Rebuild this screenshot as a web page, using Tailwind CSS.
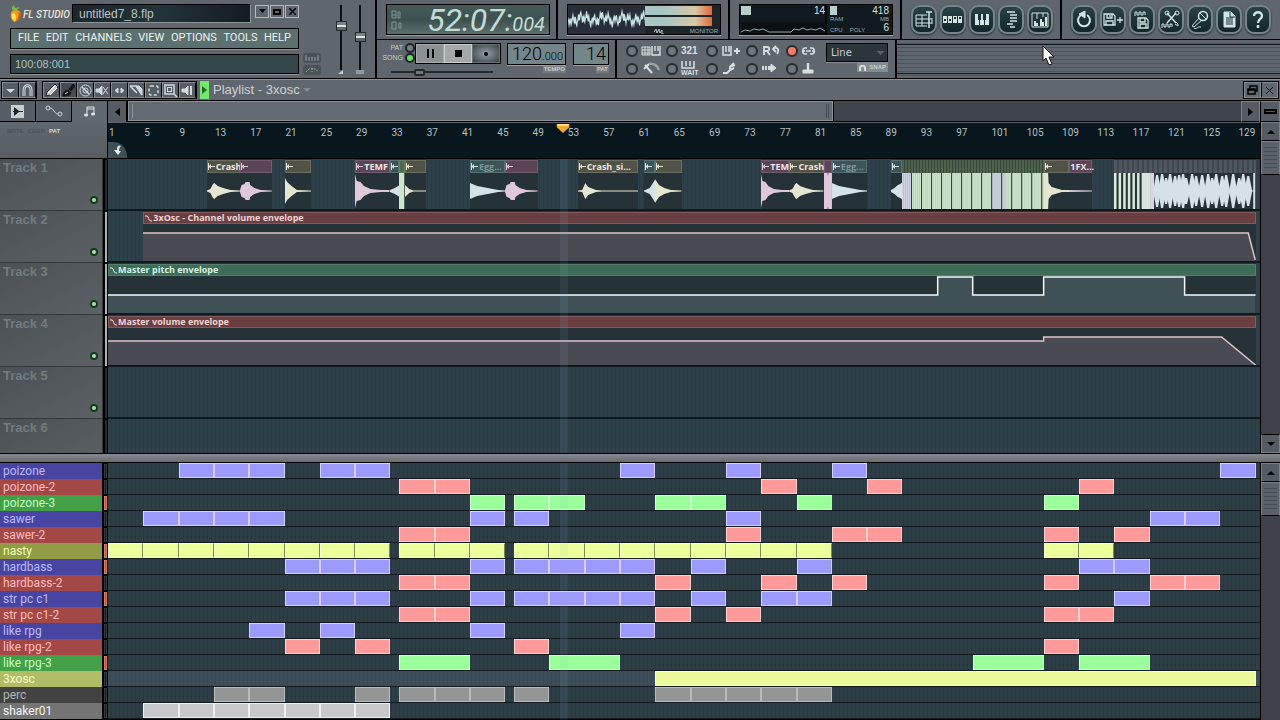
<!DOCTYPE html>
<html lang="en">
<head>
    <meta charset="UTF-8">
    <meta name="viewport" content="width=device-width, initial-scale=1.0">
    <title>FL Studio - untitled7_8.flp</title>
    <script src="https://cdn.jsdelivr.net/npm/@tailwindcss/browser@4"></script>
</head>
<body class="flex h-screen flex-col overflow-hidden bg-black font-['Liberation_Sans',sans-serif] text-[#c5cbcd] select-none">

    <!-- Main toolbar -->
    <header class="flex h-[79px] shrink-0 border-b border-black bg-[#5f666d]">
        <div class="flex w-[377px] shrink-0 border-r-2 border-black pl-[10px]">
            <div class="w-[289px]">
                <div class="mt-[4px] flex h-[20px] items-start">
                    <div class="flex h-[20px] items-center">
                        <svg class="h-[18px] w-[12px]" viewBox="0 0 12 18">
                            <path d="M2 6C0 9 0 14 4 17C8 17 11 12 11 8C10 5 5 4 2 6Z" fill="#f39a1d"/>
                            <path d="M2 9C1 13 3 15 5 16C7 13 6 10 4 8Z" fill="#ffe04a"/>
                            <path d="M8 7C10 9 8 14 5 17C9 16 11 12 11 8Z" fill="#d9531e"/>
                            <path d="M3 5C1 4 2 1 4 0C4 2 5 3 6 3C7 2 9 2 10 3C8 3 7 5 6 6Z" fill="#6fbf3a"/>
                        </svg>
                        <span class="w-[50px] pl-px font-['Roboto',sans-serif] text-[10px] font-medium whitespace-nowrap text-[#ece5d6] italic">FL STUDIO</span>
                    </div>
                    <div class="flex h-[19px] flex-1 items-center border border-t-black border-r-[#8d9498] border-b-[#8d9498] border-l-black bg-linear-to-r from-[#1a262b] via-[#22333a] to-[#141c22] pl-[6px] text-[12px] text-[#b9c5c4]">untitled7_8.flp</div>
                    <div class="mt-px ml-[4px] flex gap-px">
                        <button aria-label="Minimize" class="flex h-[13px] w-[14px] items-center justify-center border border-[#b4babd] bg-[#5f666d]"><svg class="h-[5px] w-[7px]" viewBox="0 0 7 5"><path d="M0 0H7L3.500 4Z"/></svg></button>
                        <button aria-label="Restore" class="flex h-[13px] w-[14px] items-center justify-center border border-[#b4babd] bg-[#5f666d]"><svg class="h-[6px] w-[8px]" viewBox="0 0 8 6"><path d="M1 1H7V5H1Z" fill="none" stroke="#000" stroke-width="2"/></svg></button>
                        <button aria-label="Close" class="flex h-[13px] w-[14px] items-center justify-center border border-[#b4babd] bg-[#5f666d]"><svg class="h-[7px] w-[7px]" viewBox="0 0 7 7"><path d="M0 0L7 7M7 0L0 7" stroke="#000" stroke-width="1.500"/></svg></button>
                    </div>
                </div>
                <nav class="mt-[4px] flex h-[21px] items-center justify-between border border-black bg-[#5c706f] px-[7px] font-['Roboto',sans-serif] text-[11px] text-[#e8f3f1] shadow-[0_1px_0_#8b9296]">
                    <button>FILE</button>
                    <button>EDIT</button>
                    <button>CHANNELS</button>
                    <button>VIEW</button>
                    <button>OPTIONS</button>
                    <button>TOOLS</button>
                    <button>HELP</button>
                </nav>
                <div class="mt-[5px] flex h-[20px] items-center border border-black bg-[#33464a] pl-[4px] text-[11px] text-[#b3c1be] shadow-[0_1px_0_#8b9296]">100:08:001</div>
            </div>
            <div class="ml-[4px] flex flex-col gap-[2px] pt-[53px]">
                <button aria-label="Typing keyboard" class="flex h-[10px] w-[18px] items-center justify-center rounded-[3px] bg-[#4a5157]"><svg class="h-[6px] w-[14px]" viewBox="0 0 14 6"><path d="M1 0V6M4 2V6M7 2V6M10 2V6M13 0V6" stroke="#9aa3a8"/></svg></button>
                <button aria-label="Metronome" class="flex h-[10px] w-[18px] items-center justify-center rounded-[3px] bg-[#4a5157]"><svg class="h-[6px] w-[14px]" viewBox="0 0 14 6"><path d="M1 5C4 0 10 0 13 5M7 1V5" fill="none" stroke="#9aa3a8" stroke-dasharray="2 1"/></svg></button>
            </div>
            <div class="ml-[14px] flex gap-[7px] pt-[5px]">
                <div class="flex flex-col items-center">
                    <input type="range" aria-label="Master volume" value="71" class="h-[65px] w-[12px] appearance-none bg-[linear-gradient(to_right,transparent_5px,#0d1013_5px,#0d1013_7px,transparent_7px)] [direction:rtl] [writing-mode:vertical-lr] [&::-webkit-slider-thumb]:h-[10px] [&::-webkit-slider-thumb]:w-[11px] [&::-webkit-slider-thumb]:appearance-none [&::-webkit-slider-thumb]:border [&::-webkit-slider-thumb]:border-[#23282c] [&::-webkit-slider-thumb]:bg-[linear-gradient(#7b8185_3px,#e0e4e4_3px,#e0e4e4_5px,#5e6468_5px)]">
                    <svg class="h-[4px] w-[6px]" viewBox="0 0 6 4"><path d="M0 4H5V0Z" fill="#c6ccce"/></svg>
                </div>
                <div class="flex flex-col items-center">
                    <input type="range" aria-label="Master pitch" value="51" class="h-[65px] w-[12px] appearance-none bg-[linear-gradient(to_right,transparent_5px,#0d1013_5px,#0d1013_7px,transparent_7px)] [direction:rtl] [writing-mode:vertical-lr] [&::-webkit-slider-thumb]:h-[10px] [&::-webkit-slider-thumb]:w-[11px] [&::-webkit-slider-thumb]:appearance-none [&::-webkit-slider-thumb]:border [&::-webkit-slider-thumb]:border-[#23282c] [&::-webkit-slider-thumb]:bg-[linear-gradient(#7b8185_3px,#e0e4e4_3px,#e0e4e4_5px,#5e6468_5px)]">
                    <svg class="h-[4px] w-[8px]" viewBox="0 0 8 4"><path d="M1 0V4M3 0V4M5 0V4M7 0V4" stroke="#c6ccce"/></svg>
                </div>
            </div>
        </div>

        <div class="flex min-w-0 flex-1 flex-col">
            <div class="flex h-[40px] border-b border-black">
                <!-- Time display -->
                <div class="flex w-[181px] shrink-0 items-center border-r-2 border-black pl-[9px]">
                    <div class="flex h-[31px] w-[164px] items-center border border-black bg-linear-to-b from-[#465a5a] via-[#3c504f] to-[#5a706e] text-[#c3dcd6] shadow-[0_1px_0_#9aa1a4]">
                        <svg class="ml-[4px] h-[20px] w-[12px]" viewBox="0 0 12 20"><path d="M1 1H5V8H1ZM1 5H5M7 2H9V8H7ZM1 12H5V19H1ZM8 13H10V18H8Z" fill="none" stroke="#7f9894"/></svg>
                        <span class="ml-auto font-['Roboto',sans-serif] text-[32px] leading-none italic">52:07:</span>
                        <span class="mt-[8px] mr-[4px] font-['Roboto',sans-serif] text-[20px] leading-none italic">004</span>
                    </div>
                </div>
                <!-- Oscilloscope -->
                <div class="flex w-[172px] shrink-0 items-center border-r-2 border-black pl-[9px]">
                    <div class="flex h-[31px] w-[154px] border border-black bg-[#1d2529] shadow-[0_1px_0_#9aa1a4]">
                        <svg class="h-[29px] w-[77px] bg-[#272e3a]" viewBox="0 0 77 29"><path id="scope" fill="#c6e4e2"/></svg>
                        <div class="flex flex-1 flex-col gap-[2px] pt-px">
                            <div class="h-[9px] w-[67px] bg-[linear-gradient(90deg,#a9c6c4_30%,#d8c8a4_75%,#e0693a)]"></div>
                            <div class="h-[9px] w-[67px] bg-[linear-gradient(90deg,#a9c6c4_30%,#d8c8a4_75%,#e0693a)]"></div>
                            <div class="flex h-[6px] items-center justify-between pl-[9px]">
                                <svg class="h-[5px] w-[10px]" viewBox="0 0 10 5"><path d="M0 3L2 0L3 4L5 0L6 4L8 1V5H10" fill="none" stroke="#b4c4c5"/></svg>
                                <span class="pr-[2px] text-[6px] leading-none text-[#9aa8aa]">MONITOR</span>
                            </div>
                        </div>
                    </div>
                </div>
                <!-- CPU and memory -->
                <div class="flex w-[172px] shrink-0 items-center border-r-2 border-black pl-[9px]">
                    <div class="flex h-[31px] w-[154px] border border-black bg-[#111a1f] shadow-[0_1px_0_#9aa1a4]">
                        <div class="flex w-[85px] flex-col pl-px">
                            <div class="flex h-[11px] items-center justify-between"><i class="block h-[9px] w-[10px] bg-[#b9cfcd]"></i><span class="text-[10px] leading-none text-[#d5e2e0]">14</span></div>
                            <svg class="mt-[6px] h-[12px] w-[84px] bg-[#0a1014]" viewBox="0 0 84 12"><path d="M0 10L4 8L9 9L13 7L18 8L22 7L26 9L28 10H50L53 7L58 8L62 6L66 8L70 7L75 8L79 6L84 9" fill="none" stroke="#98a7aa"/></svg>
                        </div>
                        <div class="flex flex-1 flex-col border-l-2 border-[#05080a] px-[3px] text-[6px] leading-none text-[#9aa8aa]">
                            <div class="flex h-[11px] items-center justify-between"><i class="block h-[9px] w-[7px] bg-[#b9cfcd]"></i><span class="text-[10px] leading-none text-[#d5e2e0]">418</span></div>
                            <div class="flex justify-between"><span>RAM</span><span>MB</span></div>
                            <div class="mt-px flex items-end gap-[7px]"><span>CPU</span><span>POLY</span><span class="ml-auto text-[10px] leading-none text-[#d5e2e0]">6</span></div>
                        </div>
                    </div>
                </div>
                <!-- Window and tool buttons -->
                <div id="window-buttons" class="flex w-[160px] shrink-0 items-center gap-[3px] border-r-2 border-black pl-[9px]"></div>
                <div id="tool-buttons" class="flex flex-1 items-center gap-[3px] pl-[9px]"></div>
            </div>

            <div class="flex flex-1">
                <!-- Transport -->
                <div class="flex w-[240px] shrink-0 border-r-2 border-black pl-[7px]">
                    <div class="pt-[3px]">
                        <div class="flex">
                            <div class="flex w-[31px] flex-col items-end text-[7px]">
                                <label class="flex h-[10px] items-center gap-[2px]">PAT<input type="radio" name="mode" class="h-[10px] w-[10px] appearance-none rounded-full border-2 border-[#1d2327] bg-[#767e83] checked:bg-[#5be05f]"></label>
                                <label class="flex h-[10px] items-center gap-[2px]">SONG<input type="radio" name="mode" checked class="h-[10px] w-[10px] appearance-none rounded-full border-2 border-[#1d2327] bg-[#767e83] checked:bg-[#5be05f]"></label>
                            </div>
                            <div class="flex h-[21px] border border-black">
                                <button aria-label="Pause" class="flex w-[28px] items-center justify-center border border-[#a5abae] bg-[#8b9194]"><svg class="h-[9px] w-[7px]" viewBox="0 0 7 9"><path d="M0 0H2V9H0ZM5 0H7V9H5Z"/></svg></button>
                                <button aria-label="Stop" class="flex w-[28px] items-center justify-center border border-[#c9cdcf] bg-[#a3a8aa]"><i class="block h-[7px] w-[7px] bg-black"></i></button>
                                <button aria-label="Record" class="flex w-[28px] items-center justify-center border border-[#6b7377] bg-radial from-[#93a0a3] to-[#3a4347]"><i class="block h-[4px] w-[4px] rounded-full bg-black"></i></button>
                            </div>
                        </div>
                        <input type="range" aria-label="Song position" value="25" class="mt-[4px] ml-[7px] block h-[8px] w-[102px] appearance-none bg-[linear-gradient(transparent_3px,#24292d_3px,#24292d_5px,transparent_5px)] [&::-webkit-slider-thumb]:h-[7px] [&::-webkit-slider-thumb]:w-[11px] [&::-webkit-slider-thumb]:appearance-none [&::-webkit-slider-thumb]:rounded-[2px] [&::-webkit-slider-thumb]:border-2 [&::-webkit-slider-thumb]:border-[#24292d] [&::-webkit-slider-thumb]:bg-[#6f767b]">
                    </div>
                    <div class="ml-[6px] flex flex-col items-end pt-[3px]">
                        <div class="flex h-[22px] w-[59px] items-center justify-end border border-black bg-[#74868a] pr-[2px] text-black shadow-[0_1px_0_#9aa1a4]"><span class="font-['Roboto',sans-serif] text-[18px] leading-none font-light">120</span><span class="mt-[5px] font-['Roboto',sans-serif] text-[11px] leading-none font-light">.000</span></div>
                        <span class="mt-px bg-[#747b80] px-px text-[6px] leading-[7px] font-bold">TEMPO</span>
                    </div>
                    <div class="ml-[7px] flex flex-col items-end pt-[3px]">
                        <div class="flex h-[22px] w-[36px] items-center justify-end border border-black bg-[#74868a] pr-[2px] font-['Roboto',sans-serif] text-[18px] leading-none font-light text-black shadow-[0_1px_0_#9aa1a4]">14</div>
                        <span class="mt-px bg-[#747b80] px-px text-[6px] leading-[7px] font-bold">PAT</span>
                    </div>
                </div>
                <!-- Shortcut switches -->
                <div class="flex w-[280px] shrink-0 border-r-2 border-black pl-[9px]">
                    <div id="switches" class="grid w-[200px] grid-cols-5 grid-rows-2 content-start pt-[3px]"></div>
                    <div class="flex flex-col items-end pt-[3px]">
                        <select aria-label="Snap" class="h-[19px] w-[62px] appearance-none border border-black bg-[#2c343c] bg-[linear-gradient(45deg,transparent_50%,#566068_50%),linear-gradient(135deg,#566068_50%,transparent_50%)] bg-[length:4px_4px] bg-[position:50px_7px,54px_7px] bg-no-repeat pl-[4px] font-['DejaVu_Sans',sans-serif] text-[10px] text-[#c8ced1] shadow-[0_1px_0_#8b9296]"><option>Line</option></select>
                        <span class="mt-px flex h-[9px] items-center gap-[3px] bg-[#858c90] px-[2px] text-[6px] font-bold"><svg class="h-[6px] w-[7px]" viewBox="0 0 7 6"><path d="M1 6V3C1 0 6 0 6 3V6" fill="none" stroke="#d8dcde" stroke-width="2"/></svg>SNAP</span>
                    </div>
                </div>
                <div class="flex flex-1 flex-col justify-between bg-[repeating-linear-gradient(#5f666d_0,#5f666d_3px,#4c5359_3px,#4c5359_4px)]">
                    <i class="mt-[4px] h-px bg-[#14181c]"></i>
                    <i class="mb-[4px] h-px bg-[#14181c]"></i>
                </div>
            </div>
        </div>
    </header>

    <!-- Playlist title bar -->
    <div class="flex h-[22px] shrink-0 items-center border-t border-b border-t-[#8b9296] border-b-black bg-[#60676e] px-px">
        <div id="menu-tools" class="flex border border-black"></div>
        <div id="edit-tools" class="ml-[5px] flex border border-black"></div>
        <button aria-label="Show pattern" class="ml-[3px] flex h-[18px] w-[9px] items-center justify-center bg-[#72e86c]"><svg class="h-[8px] w-[5px]" viewBox="0 0 5 8"><path d="M0 0L5 4L0 8Z" fill="#246a2b"/></svg></button>
        <h1 class="ml-[4px] text-[13px] leading-[16px] text-[#ccd1d4]">Playlist - 3xosc</h1>
        <svg class="ml-[3px] h-[4px] w-[8px]" viewBox="0 0 8 4"><path d="M0 0H8L4 4Z" fill="#848b90"/></svg>
        <div class="ml-auto flex border border-black">
            <button aria-label="Detach" class="flex h-[16px] w-[17px] items-center justify-center border border-[#868d91]"><svg class="h-[10px] w-[11px]" viewBox="0 0 11 10"><path d="M3 3V1H10V6H8M1 4H8V9H1ZM1 5H8" fill="none" stroke="#000" stroke-width="1.500"/></svg></button>
            <button aria-label="Close playlist" class="flex h-[16px] w-[17px] items-center justify-center border border-l-black border-[#868d91]"><svg class="h-[7px] w-[7px]" viewBox="0 0 7 7"><path d="M0 0L7 7M7 0L0 7" stroke="#14181c"/></svg></button>
        </div>
    </div>

    <!-- Playlist tracks -->
    <main class="flex min-h-0 flex-1 flex-col">
        <div class="flex h-[21px] shrink-0 bg-[#3f454b]">
            <div class="flex w-[108px] shrink-0 border-r border-black">
                <button aria-label="Audio clips" class="flex w-[36px] items-center justify-center border-r border-b border-black bg-[#565d64]"><svg class="h-[13px] w-[13px]" viewBox="0 0 13 13"><rect width="13" height="13" fill="#c9ced0"/><path d="M2 6H12V7H2ZM3 2L8 6V7L3 11Z" fill="#1d2327"/></svg></button>
                <button aria-label="Automation clips" class="flex w-[36px] items-center justify-center border-r border-b border-black bg-[#565d64]"><svg class="h-[12px] w-[18px]" viewBox="0 0 18 12"><path d="M5 3C9 3 9 9 13 9" fill="none" stroke="#d3d8da"/><circle cx="3" cy="3" r="2" fill="none" stroke="#d3d8da"/><circle cx="15" cy="9" r="2" fill="none" stroke="#d3d8da"/></svg></button>
                <button aria-label="Pattern clips" class="flex w-[35px] items-center justify-center bg-[#60676e]"><svg class="h-[11px] w-[11px]" viewBox="0 0 11 11"><path d="M3 9V1H10V8M3 3H10" fill="none" stroke="#e0e4e5"/><ellipse cx="2" cy="9" rx="2" ry="1.500" fill="#e0e4e5"/><ellipse cx="9" cy="8" rx="2" ry="1.500" fill="#e0e4e5"/></svg></button>
            </div>
            <button aria-label="Scroll left" class="flex w-[20px] shrink-0 items-center justify-center border-r-2 border-black bg-[#555c63]"><svg class="h-[8px] w-[5px]" viewBox="0 0 5 8"><path d="M5 0L0 4L5 8Z"/></svg></button>
            <div class="flex-1 border-b border-black">
                <div class="flex h-[20px] w-[63.3%] items-center justify-between border border-[#8b9296] bg-[#636a71] px-[3px] shadow-[1px_0_0_#000]">
                    <i class="h-[14px] w-[2px] border-l border-[#8b9296]"></i>
                    <i class="h-[14px] w-[3px] border-x border-[#464c52]"></i>
                </div>
            </div>
            <button aria-label="Scroll right" class="flex w-[19px] shrink-0 items-center justify-center border border-[#7c8388] border-b-black bg-[#555c63]"><svg class="h-[8px] w-[5px]" viewBox="0 0 5 8"><path d="M0 0L5 4L0 8Z"/></svg></button>
            <button aria-label="Zoom" class="flex w-[20px] shrink-0 items-center justify-center border border-[#7c8388] border-b-black border-l-black bg-[#555c63]"><i class="block h-[5px] w-[13px] border-2 border-black bg-[#565d64]"></i></button>
        </div>

        <div class="flex min-h-0 flex-1">
            <div class="flex min-w-0 flex-1 flex-col border-r border-black">
                <div class="flex h-[37px] shrink-0 border-b border-black">
                    <div class="flex w-[107px] shrink-0 gap-[4px] bg-linear-to-b from-[#60676e] to-[#565c62] pt-[6px] pl-[7px] text-[6px] leading-[7px] font-bold text-[#4c5358]">
                        <span>NOTE</span><span>CHAN</span><span class="text-[#d8dcde]">PAT</span>
                    </div>
                    <div class="relative ml-px min-w-0 flex-1 overflow-hidden border-t border-[#5b656b] bg-[#08161d]">
                        <div id="ruler" class="flex pt-[3px] font-['Roboto',sans-serif] text-[10px] leading-[14px] text-[#b4c0c2]"></div>
                        <div class="absolute bottom-0 left-0 flex h-[16px] w-[19px] items-center justify-center rounded-tr-[14px] bg-[#3e5159]"><svg class="h-[10px] w-[9px]" viewBox="0 0 9 10"><path d="M8 1C4 0 4 3 4 5H1L5 10L8 6H6C6 4 6 3 8 1Z" fill="#e8eef0"/></svg></div>
                        <svg class="absolute top-px left-[39.500%] h-[10px] w-[13px] -translate-x-1/2" viewBox="0 0 13 10"><path d="M0 0H13V3L6.500 9L0 3Z" fill="#f7a922"/><path d="M1 0H12V2H1Z" fill="#ffe28a"/></svg>
                    </div>
                </div>
                <div class="relative min-h-0 flex-1 overflow-hidden">
                    <div id="tracks"></div>
                    <div class="pointer-events-none absolute inset-y-0 right-0 left-[108px]"><i class="absolute inset-y-0 left-[39.200%] w-[8px] bg-[#8fb3c0]/10"></i></div>
                </div>
            </div>
            <div class="flex w-[19px] shrink-0 flex-col bg-[#3e4248]">
                <button aria-label="Scroll up" class="flex h-[19px] items-center justify-center border border-[#7c8388] border-b-black bg-[#555c63]"><svg class="h-[4px] w-[8px]" viewBox="0 0 8 4"><path d="M0 4H8L4 0Z"/></svg></button>
                <div class="h-[34px] border border-[#7c8388] border-b-black bg-[#5a6168] px-[2px] py-[5px]"><i class="block h-[22px] bg-[repeating-linear-gradient(#464c52_0,#464c52_1px,transparent_1px,transparent_4px)]"></i></div>
                <button aria-label="Scroll down" class="mt-auto flex h-[19px] items-center justify-center border border-[#7c8388] border-t-black bg-[#555c63]"><svg class="h-[4px] w-[8px]" viewBox="0 0 8 4"><path d="M0 0H8L4 4Z"/></svg></button>
            </div>
        </div>
    </main>

    <div class="h-[10px] shrink-0 border-y border-black bg-linear-to-b from-[#858b90] to-[#646b71]"></div>

    <!-- Pattern clips -->
    <section class="flex shrink-0">
        <div class="relative min-w-0 flex-1 border-r border-black pb-px">
            <div id="patterns"></div>
            <div class="pointer-events-none absolute inset-y-0 right-0 left-[108px]"><i class="absolute inset-y-0 left-[39.200%] w-[8px] bg-[#8fb3c0]/10"></i></div>
        </div>
        <div class="flex w-[19px] shrink-0 flex-col bg-[#3e4248]">
            <button aria-label="Scroll patterns up" class="flex h-[19px] items-center justify-center border border-[#7c8388] border-b-black bg-[#555c63]"><svg class="h-[4px] w-[8px]" viewBox="0 0 8 4"><path d="M0 4H8L4 0Z"/></svg></button>
            <div class="h-[34px] border border-[#7c8388] border-b-black bg-[#5a6168] px-[2px] py-[5px]"><i class="block h-[22px] bg-[repeating-linear-gradient(#464c52_0,#464c52_1px,transparent_1px,transparent_4px)]"></i></div>
        </div>
    </section>

    <!-- Mouse pointer -->
    <svg class="pointer-events-none absolute top-[45px] left-[1042px] h-[22px] w-[13px]" viewBox="0 0 13 22"><path d="M1 1V16L4 13L7 20L10 19L7 12H12Z" fill="#fff" stroke="#111"/></svg>

    <script>
        // Bars visible across the timeline
        const BARS = 130.5;
        const pct = (bars) => (bars / BARS * 100) + '%';

        const windowButtons = [
            ['Playlist', '<path d="M3 6H14M3 10H19M3 14H19M3 17H14M3 6V17M9 6V17M19 9V15"/><path d="M13 3H19M16 3V19" stroke-width="1.5"/>'],
            ['Step sequencer', '<path d="M1 7H5V14H1ZM6 7H10V14H6ZM11 7H15V14H11ZM16 7H20V14H16Z" fill="#d3e4e2" stroke="none"/><path d="M2 11H4M7 11H9M12 9H14M17 9H19" stroke="#1a3237" stroke-width="2"/>'],
            ['Piano roll', '<path d="M4 5H18V16H4Z" fill="#d3e4e2" stroke="none"/><path d="M8.500 5V16M13.500 5V16" stroke="#1a3237"/><path d="M8.500 5V11M13.500 5V11" stroke="#1a3237" stroke-width="3"/>'],
            ['Browser', '<path d="M7 3H15M10 6H17M10 9H17M10 12H17M7 15H13M10 18H15" stroke-width="1.5"/>'],
            ['Mixer', '<path d="M3 4H19V18H3ZM8 4V10M14 4V8"/><path d="M6 17V12M8 17V14M12 17V10M14 17V13M17 17V8" stroke-width="2"/>']
        ];
        const toolButtons = [
            ['Undo', '<path d="M8 6A6 6 0 1 0 14 6" stroke-width="2"/><path d="M6 5L12 2V9Z" fill="#d3e4e2"/>'],
            ['Save new version', '<path d="M2 5H11L13 7V16H2ZM5 5V9H10V5M4 16V12H11V16M8 6V8M15 11H21M18 8V14" stroke-width="1.3"/>'],
            ['Render', '<path d="M4 7V3H6V6H8V3H10V6H12V3H14V6"/><path d="M7 9H15L17 11V19H7ZM9 9V13H14V9M9 19V15H15V19" stroke-width="1.3"/>'],
            ['Edit audio', '<path d="M7 4L16 14M16 4L7 14" stroke-width="1.5"/><circle cx="7" cy="4" r="2"/><circle cx="17" cy="4" r="2"/><path d="M16 13L18 15V17L15 15M2 19V15H4V18H6V15H8V18H10V15H12V18"/>'],
            ['One-click recording', '<circle cx="14" cy="7" r="4.500" stroke-width="1.5"/><path d="M11 4L17 10M10 9L3 17L5 18L13 11M5 19C8 21 8 17 12 18"/>'],
            ['Notes', '<path d="M6 3H13L17 7V18H6Z" fill="#d3e4e2"/><path d="M12 3V8H17M8 9H15M8 11H15M8 13H15M8 15H15" stroke="#1a3237"/>'],
            ['Help', '<path d="M7 7C7 2 15 2 15 7C15 10 11 10 11 14" stroke-width="2.300"/><path d="M11 16V19" stroke-width="2.500"/>']
        ];
        const renderRound = (list) => list.map(([name, icon]) => `
            <button aria-label="${name}" class="flex h-[29px] w-[26px] items-center justify-center rounded-[9px] border-2 border-[#71878a] bg-linear-to-b from-[#2a4145] to-[#12262b] shadow-[0_1px_2px_#22282c]">
                <svg class="h-[22px] w-[22px] shrink-0" viewBox="0 0 22 22" fill="none" stroke="#d3e4e2">${icon}</svg>
            </button>`).join('');
        document.getElementById('window-buttons').innerHTML = renderRound(windowButtons);
        document.getElementById('tool-buttons').innerHTML = renderRound(toolButtons);

        // Shortcut switches, row by row
        const switches = [
            ['Typing keyboard to piano', '<path d="M1 2H9V10H1ZM1 5H9M1 8H9M4 2V10M7 2V10"/><path d="M11 1V10H19V1M14 1V6M17 1V6" stroke-width="1.4"/>'],
            ['Countdown before recording', ''],
            ['Blend recording', '<path d="M2 1V10H10V1M5 1V7M8 1V7" stroke-width="1.500"/><path d="M13 6H19M16 3V9" stroke-width="2"/>'],
            ['Loop recording', '<path d="M3 10V2H6C9 2 9 6 6 6H3M6 6L9 10" stroke-width="1.8"/><path d="M12 4C16 1 19 5 16 9M15 1L12 4L15 7" stroke-width="1.800"/>'],
            ['Keep grouped', '<path d="M6 3H4C1 3 1 9 4 9H6M9 3H11C14 3 14 9 11 9H9M1 6H4M5 6H10M11 6H14" stroke-width="1.6"/>'],
            ['Wait for input', '<path d="M4 3L11 11M3 7L8 2" stroke-width="2"/><path d="M8 2C13 1 17 4 18 8" stroke="#9aa2a6" stroke-width="2.500"/>'],
            ['Metronome', ''],
            ['Step editing', '<path d="M2 11H6L9 8V5L13 1M9 8L13 6M11 4L14 3" stroke-width="2"/>'],
            ['Auto scroll', '<path d="M1 6H3M4 6H6M7 6H10" stroke-width="4"/><path d="M10 2L15 6L10 10Z" fill="#d9dee0"/>'],
            ['Joystick', '<path d="M7 1V8" stroke-width="2.500"/><path d="M2 8H12V11H2Z" fill="#d9dee0"/>']
        ];
        document.getElementById('switches').innerHTML = switches.map(([name, icon], i) => {
            let drawn = `<svg class="h-[13px] w-[20px]" viewBox="0 0 20 13" fill="none" stroke="#d9dee0">${icon}</svg>`;
            if (i === 1) drawn = '<span class="text-[10px] leading-[12px] font-bold text-[#d9dee0]">321</span>';
            if (i === 6) drawn = '<span class="flex flex-col"><svg class="h-[8px] w-[14px]" viewBox="0 0 14 8"><path d="M1 0V7H13V0M5 0V5M9 0V5" fill="none" stroke="#d9dee0" stroke-width="1.5"/></svg><span class="text-[7px] leading-[7px] font-bold text-[#d9dee0]">WAIT</span></span>';
            return `
            <label class="flex h-[16px] items-center gap-[3px]">
                <input type="checkbox" aria-label="${name}" ${i === 4 ? 'checked' : ''} class="h-[12px] w-[12px] shrink-0 appearance-none rounded-full border-2 border-[#252b2f] bg-[#6d757a] checked:bg-[#ff7a66]">
                ${drawn}
            </label>`;
        }).join('');

        // Playlist toolbar
        const menuTools = [
            ['Options', '<path d="M3 6H12L7.500 10Z" fill="#d3d8da" stroke="none"/>'],
            ['Snap', '<path d="M4 13V7C4 1 11 1 11 7V13" stroke-width="3"/><path d="M4 13V7C4 1 11 1 11 7V13" stroke="#6b7277"/>']
        ];
        const editTools = [
            ['Draw', '<path d="M2 13L3 9L11 1L14 4L6 12Z" fill="#c4cacc" stroke="#22282c"/><path d="M4 10L11 3M6 12L13 5" stroke="#fff"/>'],
            ['Paint', '<path d="M2 13C2 9 5 7 7 7L10 10C9 13 5 13 2 13ZM8 6L12 1L14 3L10 8Z" fill="#14181b" stroke="#14181b"/><path d="M4 11L7 9"/>'],
            ['Delete', '<circle cx="7.500" cy="7.500" r="5.500"/><circle cx="7.500" cy="7.500" r="2.500"/><path d="M4 4L11 11" stroke-width="1.500"/>'],
            ['Mute', '<path d="M1 6H4L7 3V12L4 9H1Z" fill="#d3d8da"/><path d="M8 4L13 11M13 4L8 11"/>'],
            ['Slip', '<path d="M6 5V10L3 7.500ZM9 5V10L12 7.500Z" fill="#d3d8da"/>'],
            ['Slice', '<path d="M1 3H7L13 12M1 3L8 10" stroke-width="1.500"/><path d="M7 3L13 12V6L10 3Z" fill="#d3d8da"/>'],
            ['Select', '<rect x="3" y="3" width="9" height="9" rx="2" stroke-width="1.500" stroke-dasharray="3 2"/>'],
            ['Zoom', '<path d="M2 2H11V11H2ZM11 11L14 14" stroke-width="1.5"/><rect x="4.500" y="4.500" width="4" height="4"/>'],
            ['Playback', '<path d="M2 6H5L8 3V12L5 9H2Z" fill="#d3d8da"/><path d="M11 3V12" stroke-width="2"/>']
        ];
        const renderTools = (list) => list.map(([name, icon]) => `
            <button aria-label="${name}" class="flex h-[16px] w-[17px] items-center justify-center border border-[#868d91] border-r-black ${name === 'Paint' ? 'bg-[#454b51]' : 'bg-[#555c63]'}">
                <svg class="h-[15px] w-[15px] shrink-0" viewBox="0 0 15 15" fill="none" stroke="#d3d8da">${icon}</svg>
            </button>`).join('');
        document.getElementById('menu-tools').innerHTML = renderTools(menuTools);
        document.getElementById('edit-tools').innerHTML = renderTools(editTools);

        // Ruler
        let ruler = '';
        for (let bar = 1; bar <= 129; bar += 4) {
            ruler += `<span class="shrink-0 pl-px" style="width:${bar === 129 ? 'auto' : pct(4)}">${bar}</span>`;
        }
        document.getElementById('ruler').innerHTML = ruler;

        // Oscilloscope trace
        let upper = '', lower = '';
        for (let x = 0; x <= 77; x++) {
            const mid = 14 + Math.sin(x * 0.9) * 3 + Math.sin(x * 0.31) * 2 + Math.sin(x * 2.3) * 3;
            const reach = 2 + Math.abs(Math.sin(x * 1.7)) * 2;
            upper += `L${x} ${mid - reach}`;
            lower = `L${x} ${mid + reach}` + lower;
        }
        document.getElementById('scope').setAttribute('d', 'M' + upper.slice(1) + lower + 'Z');

        // Audio clips: start bar, length, colour, label, amplitude points (x 0-100, level 0-18)
        const tones = {
            olive: ['bg-[#505346] border-[#6b6d61]', '#e4e6d0'],
            pink: ['bg-[#5a4456] border-[#745a6e]', '#e0c8dc'],
            teal: ['bg-[#3c5458] border-[#567173]', '#d3e3e6'],
            green: ['bg-[#4d6a4c] border-[#66805f]', '#cfe6cd']
        };
        const hit = [[0, 0.6], [10, 2], [18, 7], [22, 8], [32, 5], [48, 3], [70, 1], [100, 0.6]];
        const decay = [[0, 17], [5, 10], [16, 9], [26, 5], [45, 2], [75, 1], [100, 1]];
        const puff = [[0, 1], [5, 6], [14, 7], [18, 9], [30, 9], [32, 6], [45, 3], [65, 1], [100, 0.6]];
        const soft = [[0, 8], [20, 5], [50, 3], [80, 1], [100, 0.6]];
        const audioClips = [
            [11.2, 3.8, 'olive', 'Crash', hit],
            [15, 3.6, 'pink', '', puff],
            [20, 3, 'olive', '', [[0, 13], [8, 9], [25, 5], [45, 1], [100, 0.6]]],
            [28, 3.9, 'pink', 'TEMF', decay],
            [31.9, 1.1, 'teal', '', [[0, 1], [50, 3], [100, 6]]],
            [33.6, 2.4, 'olive', '', [[0, 6], [20, 2], [40, 0.6], [100, 0.6]]],
            [33, 0.6, 'green', '', [[0, 18], [100, 18]]],
            [41, 4, 'teal', 'Egg...', soft],
            [45, 3.7, 'pink', '', puff],
            [53.2, 6.8, 'olive', 'Crash_si...', [[0, 0.6], [7, 1], [10, 5], [12, 8], [17, 4], [30, 1], [40, 0.6], [100, 0.6]]],
            [60.7, 1.3, 'teal', '', [[0, 0.6], [50, 3], [100, 12]]],
            [62, 3, 'olive', '', [[0, 12], [15, 6], [35, 3], [60, 1], [100, 0.6]]],
            [74, 3.2, 'pink', 'TEM', decay],
            [77.2, 3.9, 'olive', 'Crash', hit],
            [81.1, 0.9, 'pink', '', [[0, 18], [45, 18], [50, 15], [55, 18], [100, 18]]],
            [82, 4, 'teal', 'Egg...', soft],
            [88.7, 1.3, 'teal', '', [[0, 1], [30, 3], [60, 6], [80, 7], [100, 9]]],
            [106, 2.9, 'olive', '', [[0, 18], [16, 18], [18, 8], [30, 4], [70, 1], [100, 1]]],
            [108.9, 2.6, 'pink', '1FX...', [[0, 1], [100, 0.6]]]
        ];
        const wave = (points) => 'M' + points.map(([x, a]) => `${x} ${18 - a}`).join('L')
            + 'L' + points.slice().reverse().map(([x, a]) => `${x} ${18 + a}`).join('L') + 'Z';
        const audioHtml = audioClips.map(([start, length, tone, label, points]) => `
            <div class="absolute inset-y-0 bg-[#253238]" style="left:${pct(start)};width:${pct(length)}">
                <div class="mt-px flex h-[13px] items-center gap-px border font-['Open_Sans',sans-serif] text-[9px] font-bold whitespace-nowrap ${tones[tone][0]} ${tone === 'teal' ? 'text-[#7e9698]' : 'text-[#eee6e4]'}">
                    ${label === '1FX...' || length < 1 ? '' : `<svg class="h-[7px] w-[7px] shrink-0" viewBox="0 0 7 7"><path d="M0 0H1V3L3 1V3H7V4H3V6L1 4V7H0Z" fill="${tones[tone][1]}"/></svg>`}${label}
                </div>
                <svg class="block h-[36px] w-full" viewBox="0 0 100 36" preserveAspectRatio="none"><path d="${wave(points)}" fill="${tones[tone][1]}"/></svg>
            </div>`).join('');

        // Chopped regions: dense slices, then sparse slices that turn into short blobs
        let dense = '<rect width="141" height="36" fill="#8da391"/>';
        for (let x = 0; x < 141; x += 2) {
            const fill = (x < 10 || (x > 88 && x < 104)) ? '#cdd3e2' : '#cfe6cd';
            dense += `<rect x="${x}" y="0" width="${x % 10 === 8 ? 1 : 1.7}" height="36" fill="${fill}"/>`;
        }
        for (let x = 9; x < 141; x += 10) dense += `<rect x="${x}" y="0" width="1" height="36" fill="#2c3b3c"/>`;
        let sparse = '';
        for (let x = 0; x < 28; x += 4.6) sparse += `<rect x="${x}" y="0" width="2.5" height="36" fill="#d8ecd9"/>`;
        sparse += '<rect x="28" y="0" width="8" height="36" fill="#d5e6db"/><rect x="36" y="0" width="4" height="36" fill="#ddd2e4"/>';
        [43, 48, 52, 56, 61, 65, 69, 72, 78, 82, 88, 94, 98, 102, 108, 112, 119, 125, 129, 134].forEach((x, i) => {
            const tall = [16, 17, 13, 17, 15][i % 5];
            sparse += `<path d="M${x - 4} 18L${x - 1} ${18 - tall}H${x + 1}L${x + 4} 18L${x + 1} ${18 + tall}H${x - 1}Z" fill="#d5e0e8"/>`;
        });
        sparse += '<path d="M40 18H141" stroke="#d5e0e8"/><rect x="139" y="0" width="2" height="36" fill="#d5e0e8"/>';
        const choppedHtml = `
            <div class="absolute inset-y-0 bg-[#253238]" style="left:${pct(90)};width:${pct(16)}">
                <div class="mt-px h-[13px] bg-[repeating-linear-gradient(90deg,#4f6349_0,#4f6349_2px,#384840_2px,#384840_3px)]"></div>
                <svg class="block h-[36px] w-full" viewBox="0 0 141 36" preserveAspectRatio="none">${dense}</svg>
            </div>
            <div class="absolute inset-y-0 bg-[#253238]" style="left:${pct(114)};width:${pct(16)}">
                <div class="mt-px h-[13px] bg-[repeating-linear-gradient(90deg,#53555f_0,#53555f_3px,#3b4850_3px,#3b4850_5px)]"></div>
                <svg class="block h-[36px] w-full" viewBox="0 0 141 36" preserveAspectRatio="none">${sparse}</svg>
            </div>`;

        // Automation clips: start, length, label, colour, drawing width, line
        const automation = {
            2: [4, 126, '3xOsc - Channel volume envelope', 'red', 1113, 'M0 9H1106L1113 36'],
            3: [0, 130, 'Master pitch envelope', 'green', 1148, 'M0 19H830V1H865V19H936V1H1077V19H1148'],
            4: [0, 130, 'Master volume envelope', 'red', 1148, 'M0 13H936V9H1114L1148 37']
        };
        const automationHtml = ([start, length, label, tone, span, line]) => `
            <div class="absolute inset-y-0 bg-[#253238]" style="left:${pct(start)};width:${pct(length)}">
                <div class="mt-px flex h-[12px] items-center gap-px border pl-px font-['Open_Sans',sans-serif] text-[9px] font-bold ${tone === 'red' ? 'border-[#825a5c] bg-[#693f42] text-[#f0d3d2]' : 'border-[#54806b] bg-[#3f6c57] text-[#d5f3e2]'}">
                    <svg class="h-[7px] w-[7px] shrink-0" viewBox="0 0 7 7"><path d="M0 1H2C4 1 3 6 6 6H7" fill="none" stroke="#e8eaea"/></svg>${label}
                </div>
                <svg class="block h-[38px] w-full" viewBox="0 0 ${span} 38" preserveAspectRatio="none">
                    <path d="${line}V38H0Z" fill="${tone === 'red' ? '#494a52' : '#3f5157'}"/>
                    <path d="${line}" fill="none" stroke="${tone === 'red' ? '#e0c4c8' : '#f2fbfa'}" stroke-width="1.500" vector-effect="non-scaling-stroke"/>
                </svg>
            </div>`;

        document.getElementById('tracks').innerHTML = [1, 2, 3, 4, 5, 6].map((n) => `
            <div class="flex h-[52px]">
                <div class="relative w-[103px] shrink-0 border-r border-b border-[#33383b] bg-linear-to-br from-[#4b5154] to-[#5b6165] pt-px pl-[3px]">
                    <span class="block text-[13px] leading-[16px] font-bold text-[#747b7e]">Track ${n}</span>
                    <button aria-label="Mute track ${n}" class="absolute right-[4px] bottom-[6px] h-[8px] w-[8px] rounded-full border-2 border-[#0f3d16] bg-[#b7dcb9]"></button>
                </div>
                <div class="w-[5px] shrink-0 border-l-2 border-black bg-black pt-px pb-px"><i class="block h-full w-[2px] ${n > 1 && n < 5 ? 'bg-[#aeb5b8]' : 'bg-[#222a2f]'}"></i></div>
                <div class="relative min-w-0 flex-1 overflow-hidden border-b-2 border-[#10191e] bg-[repeating-linear-gradient(90deg,#2e414b_0,#2e414b_3px,#2a3b45_3px,#2a3b45_4px)]">
                    ${n === 1 ? audioHtml + choppedHtml : ''}${automation[n] ? automationHtml(automation[n]) : ''}
                </div>
            </div>`).join('');

        // Pattern rows: name, colour, start bars (a pair gives start and length), light
        const colors = {
            blue: ['bg-[#4745a1] text-[#b9b9ff]', 'bg-[#9c9aff] border-[#d3d2ff]'],
            red: ['bg-[#a34747] text-[#ffbdbd]', 'bg-[#ff9a9a] border-[#ffd2d0]'],
            green: ['bg-[#43a047] text-[#bfffc0]', 'bg-[#9aff9a] border-[#d2ffd0]'],
            yellow: ['bg-[#939b45] text-[#f0ffb0]', 'bg-[#ebff9a] border-[#f7ffd0]'],
            lime: ['bg-[#b1bd66] text-[#f4ffc4]', 'bg-[#ebf99a] border-[#f7ffd0]'],
            gray: ['bg-[#424242] text-[#b5b5b5]', 'bg-[#949696] border-[#b9bcbc]'],
            silver: ['bg-[#747474] text-[#f4f4f4]', 'bg-[#c8c8ca] border-[#f0f0f2]']
        };
        const patterns = [
            ['poizone', 'blue', [8, 12, 16, 24, 28, 58, 70, 82, 126], 0],
            ['poizone-2', 'red', [33, 37, 74, 86, 110], 0],
            ['poizone-3', 'green', [41, 46, 50, 62, 66, 78, 106], 1],
            ['sawer', 'blue', [4, 8, 12, 16, 41, 46, 70, 118, 122], 0],
            ['sawer-2', 'red', [33, 37, 70, 82, 86, 106, 114], 0],
            ['nasty', 'yellow', [0, 4, 8, 12, 16, 20, 24, 28, 33, 37, 41, 46, 50, 54, 58, 62, 66, 70, 74, 78, 106, 110], 1],
            ['hardbass', 'blue', [20, 24, 28, 41, 46, 50, 54, 58, 66, 78, 110, 114], 1],
            ['hardbass-2', 'red', [33, 37, 62, 74, 82, 106, 118, 122], 0],
            ['str pc c1', 'blue', [20, 24, 28, 41, 46, 50, 54, 58, 66, 74, 78, 114], 1],
            ['str pc c1-2', 'red', [33, 37, 62, 70, 106, 110], 0],
            ['like rpg', 'blue', [16, 24, 41, 58], 0],
            ['like rpg-2', 'red', [20, 28, 46, 106], 0],
            ['like rpg-3', 'green', [[33, 8], [50, 8], [98, 8], [110, 8]], 1],
            ['3xosc', 'lime', [[62, 68]], 0],
            ['perc', 'gray', [12, 16, 28, 33, 37, 41, 46, 62, 66, 70, 74, 78], 0],
            ['shaker01', 'silver', [4, 8, 12, 16, 20, 24, 28], 0]
        ];
        document.getElementById('patterns').innerHTML = patterns.map(([name, color, clips, lit]) => `
            <div class="flex h-[16px]">
                <div class="w-[102px] shrink-0 pl-[3px] font-['Roboto',sans-serif] text-[12px] leading-[16px] ${colors[color][0]}">${name}</div>
                <div class="w-[6px] shrink-0 bg-black py-px pr-px pl-[2px]"><i class="block h-full border ${lit ? 'border-[#e07a5c] bg-[#c4502f]' : 'border-[#333b3f] bg-[#14191c]'}"></i></div>
                <div class="relative min-w-0 flex-1 border-b border-[#101a1f] ${name === '3xosc' ? 'bg-[repeating-linear-gradient(90deg,#3d4e5a_0,#3d4e5a_3px,#384953_3px,#384953_4px)]' : 'bg-[repeating-linear-gradient(90deg,#2d3e47_0,#2d3e47_3px,#283840_3px,#283840_4px)]'}">
                    ${clips.map((clip) => {
                        const [start, length] = Array.isArray(clip) ? clip : [clip, 4];
                        return `<i class="absolute inset-y-0 border ${colors[color][1]} ${color === 'yellow' ? 'border-r-[#7d8650]' : ''}" style="left:${pct(start)};width:${pct(length)}"></i>`;
                    }).join('')}
                </div>
            </div>`).join('');
    </script>
</body>
</html>
